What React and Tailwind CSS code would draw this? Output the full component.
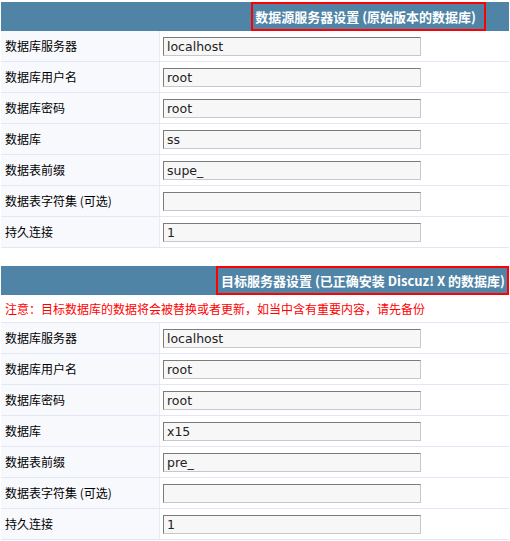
import React from "react";

const cjk = { fontFamily: '"Noto Sans CJK SC", "Noto Sans", sans-serif' };

function Row({ label, value }) {
  return (
    <div className="flex h-[31px] border-b border-[#e3e6f4]">
      <div className="w-[159px] shrink-0 flex items-center pl-[4px] text-[12px] text-black bg-[#f8f9fd] border-r border-[#e8eaf6]" style={cjk}>
        {label}
      </div>
      <div className="flex-1 flex items-center pl-[3px] pt-[1px] bg-white">
        <div
          className="w-[258px] h-[19px] bg-[#f7f7f7] border border-t-[#7b7b7b] border-l-[#7b7b7b] border-b-[#c8c8c8] border-r-[#c8c8c8] flex items-end pl-[3px] text-[12.5px] leading-[16px] text-[#222]"
          style={{ fontFamily: '"DejaVu Sans", sans-serif' }}
        >
          {value}
        </div>
      </div>
    </div>
  );
}

function Header({ title, box }) {
  return (
    <div className="h-[29px] bg-[#5084a6] flex items-center justify-end">
      <div
        className={`h-[29px] border-2 border-[#ff0000] flex items-center text-white font-bold text-[13px] ${box}`}
        style={cjk}
      >
        {title}
      </div>
    </div>
  );
}

export default function App() {
  const rows1 = [
    ["数据库服务器", "localhost"],
    ["数据库用户名", "root"],
    ["数据库密码", "root"],
    ["数据库", "ss"],
    ["数据表前缀", "supe_"],
    ["数据表字符集 (可选)", ""],
    ["持久连接", "1"],
  ];
  const rows2 = [
    ["数据库服务器", "localhost"],
    ["数据库用户名", "root"],
    ["数据库密码", "root"],
    ["数据库", "x15"],
    ["数据表前缀", "pre_"],
    ["数据表字符集 (可选)", ""],
    ["持久连接", "1"],
  ];
  return (
    <div className="w-[510px] h-[541px] bg-white pt-[2px] px-[1px]">
      <Header title="数据源服务器设置 (原始版本的数据库)" box="mr-[23px] pl-[2px] pr-[8px]" />
      {rows1.map(([l, v], i) => (
        <Row key={i} label={l} value={v} />
      ))}
      <div className="h-[18px]" />
      <Header title="目标服务器设置 (已正确安装 Discuz! X 的数据库)" box="mr-0 pl-[3px] pr-[2px]" />
      <div className="h-[28px] flex items-center pl-[4px] text-[12px] text-[#ff0000] border-b border-[#e3e6f4] bg-white" style={cjk}>
        注意：目标数据库的数据将会被替换或者更新，如当中含有重要内容，请先备份
      </div>
      {rows2.map(([l, v], i) => (
        <Row key={i} label={l} value={v} />
      ))}
    </div>
  );
}
